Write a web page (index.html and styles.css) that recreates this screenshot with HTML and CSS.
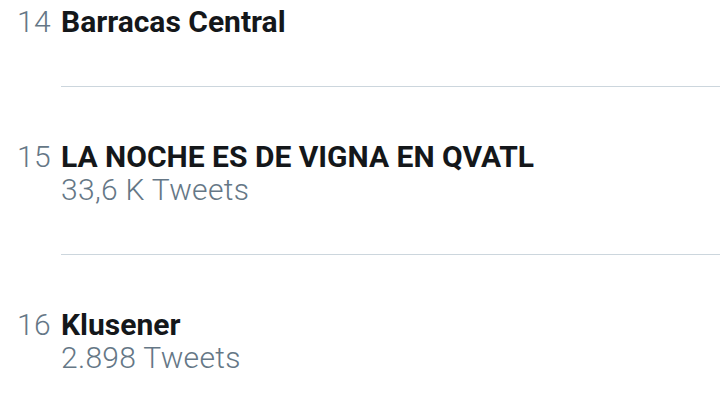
FILE: index.html
```html
<!DOCTYPE html>
<html lang="es">
<head>
<meta charset="utf-8">
<title>Tendencias</title>
<link rel="stylesheet" href="styles.css">
</head>
<body>
<ol class="trends">
  <li class="trend">
    <span class="rank">14</span>
    <div class="body">
      <div class="name">Barracas Central</div>
    </div>
  </li>
  <li class="trend">
    <span class="rank">15</span>
    <div class="body">
      <div class="name">LA NOCHE ES DE VIGNA EN QVATL</div>
      <div class="count">33,6 K Tweets</div>
    </div>
  </li>
  <li class="trend">
    <span class="rank">16</span>
    <div class="body">
      <div class="name">Klusener</div>
      <div class="count">2.898 Tweets</div>
    </div>
  </li>
</ol>
</body>
</html>
```
FILE: styles.css
```css
html, body {
  margin: 0;
  padding: 0;
  background: #ffffff;
  overflow: hidden;
}
body {
  width: 720px;
  height: 405px;
  font-family: Roboto, "Noto Sans", sans-serif;
  font-size: 30px;
  line-height: 33px;
}
.trends {
  list-style: none;
  margin: -48px 0 0 0;
  padding: 0;
}
.trend {
  display: flex;
  align-items: baseline;
}
.rank {
  width: 44px;
  padding-left: 17px;
  color: #657786;
  font-weight: 300;
  letter-spacing: 0.3px;
}
.body {
  flex: 1;
  padding: 53px 0 48px;
  border-bottom: 1px solid #ccd6dd;
}
.name {
  color: #14171a;
  font-weight: 700;
}
.count {
  color: #657786;
  font-weight: 300;
  letter-spacing: 0.3px;
}
```
